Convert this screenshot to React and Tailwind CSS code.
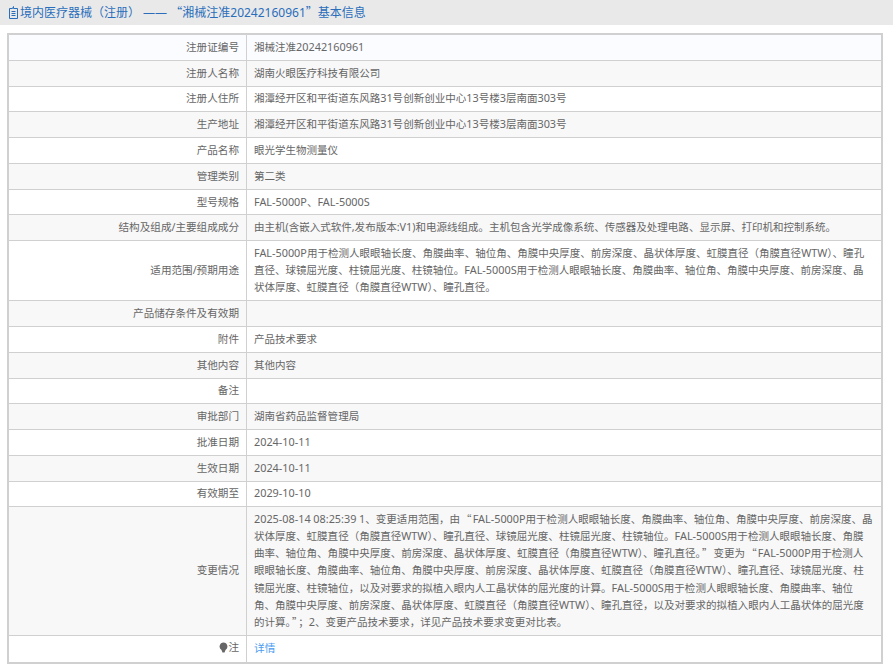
const ROWS = [
  ["注册证编号", "湘械注准20242160961"],
  ["注册人名称", "湖南火眼医疗科技有限公司"],
  ["注册人住所", "湘潭经开区和平街道东风路31号创新创业中心13号楼3层南面303号"],
  ["生产地址", "湘潭经开区和平街道东风路31号创新创业中心13号楼3层南面303号"],
  ["产品名称", "眼光学生物测量仪"],
  ["管理类别", "第二类"],
  ["型号规格", "FAL-5000P、FAL-5000S"],
  ["结构及组成/主要组成成分", "由主机(含嵌入式软件,发布版本:V1)和电源线组成。主机包含光学成像系统、传感器及处理电路、显示屏、打印机和控制系统。"],
  ["适用范围/预期用途", "FAL-5000P用于检测人眼眼轴长度、角膜曲率、轴位角、角膜中央厚度、前房深度、晶状体厚度、虹膜直径（角膜直径WTW）、瞳孔直径、球镜屈光度、柱镜屈光度、柱镜轴位。FAL-5000S用于检测人眼眼轴长度、角膜曲率、轴位角、角膜中央厚度、前房深度、晶状体厚度、虹膜直径（角膜直径WTW）、瞳孔直径。"],
  ["产品储存条件及有效期", ""],
  ["附件", "产品技术要求"],
  ["其他内容", "其他内容"],
  ["备注", ""],
  ["审批部门", "湖南省药品监督管理局"],
  ["批准日期", "2024-10-11"],
  ["生效日期", "2024-10-11"],
  ["有效期至", "2029-10-10"],
  ["变更情况", "2025-08-14 08:25:39 1、变更适用范围，由“FAL-5000P用于检测人眼眼轴长度、角膜曲率、轴位角、角膜中央厚度、前房深度、晶状体厚度、虹膜直径（角膜直径WTW）、瞳孔直径、球镜屈光度、柱镜屈光度、柱镜轴位。FAL-5000S用于检测人眼眼轴长度、角膜曲率、轴位角、角膜中央厚度、前房深度、晶状体厚度、虹膜直径（角膜直径WTW）、瞳孔直径。”变更为“FAL-5000P用于检测人眼眼轴长度、角膜曲率、轴位角、角膜中央厚度、前房深度、晶状体厚度、虹膜直径（角膜直径WTW）、瞳孔直径、球镜屈光度、柱镜屈光度、柱镜轴位，以及对要求的拟植入眼内人工晶状体的屈光度的计算。FAL-5000S用于检测人眼眼轴长度、角膜曲率、轴位角、角膜中央厚度、前房深度、晶状体厚度、虹膜直径（角膜直径WTW）、瞳孔直径，以及对要求的拟植入眼内人工晶状体的屈光度的计算。”；2、变更产品技术要求，详见产品技术要求变更对比表。"],
];

const QUOTE = "font-['Noto_Sans_CJK_SC',sans-serif] leading-none";

// latin runs sit a bit larger than the CJK text, curly quotes are full width
const cellText = (text) =>
  text.split(/([“”]|[A-Za-z0-9:.\-]+)/).map((part, i) => {
    if (part === "“" || part === "”") return <span key={i} className={`${QUOTE} px-[1.100px]`}>{part}</span>;
    if (/^[A-Za-z0-9:.\-]+$/.test(part)) return <span key={i} className="text-[10.85px] leading-none">{part}</span>;
    return part;
  });

const CELL = "border border-[#d0d0d0] pl-[7px] py-[3.87px] leading-[17.07px]";

const App = () => {
  return (
    <div lang="zh-CN" className="w-[893px] h-[672px] overflow-hidden bg-white font-['Noto_Sans','Noto_Sans_CJK_SC',sans-serif] text-[10.53px] text-[#666]">
      <div className="h-[25px] bg-[#e9e9e9] pl-[8px] flex items-center text-[12px] text-[#2a6ebb] whitespace-pre">
        <svg width="11" height="13" viewBox="0 0 11 13" fill="none" stroke="currentColor" strokeWidth="1" className="mr-px">
          <path d="M1.500 2.500h3l1-2v2h4v10h-8zM3.500 5.500h4M3.500 7.500h4M3.500 9.500h4" />
        </svg>
        <span>
          境内医疗器械（注册） —— <span className={QUOTE}>“</span>湘械注准20242160961<span className={QUOTE}>”</span>基本信息
        </span>
      </div>
      <table className="ml-[7px] mt-[8px] w-[876px] border-collapse table-fixed border-2 border-[#d0d0d0]">
        <colgroup>
          <col className="w-[238.500px]" />
          <col />
        </colgroup>
        <tbody>
          {ROWS.map(([label, value], index) => (
            <tr key={label} className={index === 0 ? "bg-[#fbfcff]" : index % 2 === 1 ? "bg-[#f8f8f8]" : "bg-white"}>
              <td className={`${CELL} pr-[7px] text-right text-[10.6px]`}>{label}</td>
              <td className={`${CELL} pr-[8px]`}>{cellText(value)}</td>
            </tr>
          ))}
          <tr className="bg-white">
            <td className={`${CELL} pr-[7px] text-right text-[10.6px]`}>
              <span className="inline-flex items-center justify-end">
                <svg width="9" height="11" viewBox="0 0 9 11" fill="#666">
                  <path d="M4.500 0.500a4 4 0 0 1 2 7.400L5.500 10.500h-2l-1-2.600A4 4 0 0 1 4.500 0.500z" />
                </svg>
                注
              </span>
            </td>
            <td className={`${CELL} pr-[8px] text-[10.67px] text-[#4a9cf0] h-[28px]`}>详情</td>
          </tr>
        </tbody>
      </table>
    </div>
  );
};

export default App;
